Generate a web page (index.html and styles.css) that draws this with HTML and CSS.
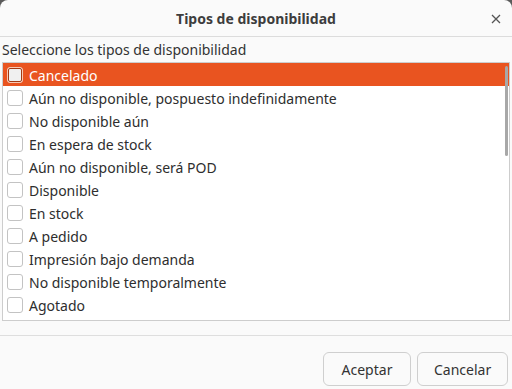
FILE: index.html
```html
<!DOCTYPE html>
<html lang="es">
<head>
  <meta charset="UTF-8">
  <meta name="viewport" content="width=device-width, initial-scale=1.0">
  <title>Tipos de disponibilidad</title>
  <link rel="stylesheet" href="styles.css">
</head>
<body>
  <div class="dialog">
    <header class="titlebar">
      <h1>Tipos de disponibilidad</h1>
      <button class="close" aria-label="Cerrar">
        <svg width="10" height="10" viewBox="0 0 10 10"><path d="M1 1L9 9M9 1L1 9" stroke="#555" stroke-width="1.3"/></svg>
      </button>
    </header>

    <main class="content">
      <p class="label">Seleccione los tipos de disponibilidad</p>
      <div class="list">
        <ul>
          <li class="selected"><span class="check"></span>Cancelado</li>
          <li><span class="check"></span>Aún no disponible, pospuesto indefinidamente</li>
          <li><span class="check"></span>No disponible aún</li>
          <li><span class="check"></span>En espera de stock</li>
          <li><span class="check"></span>Aún no disponible, será POD</li>
          <li><span class="check"></span>Disponible</li>
          <li><span class="check"></span>En stock</li>
          <li><span class="check"></span>A pedido</li>
          <li><span class="check"></span>Impresión bajo demanda</li>
          <li><span class="check"></span>No disponible temporalmente</li>
          <li><span class="check"></span>Agotado</li>
        </ul>
        <div class="scrollbar"></div>
      </div>
    </main>

    <footer class="actions">
      <button class="btn">Aceptar</button>
      <button class="btn">Cancelar</button>
    </footer>
  </div>
</body>
</html>
```

FILE: styles.css
```css
* {
  margin: 0;
  padding: 0;
  box-sizing: border-box;
}

html, body {
  width: 512px;
  height: 389px;
  background: #5a5a5a;
  overflow: hidden;
}

body {
  font-family: "Noto Sans", sans-serif;
  font-size: 14px;
  color: #333;
}

.dialog {
  width: 512px;
  height: 389px;
  background: #fafafa;
  border-radius: 8px 8px 0 0;
  display: flex;
  flex-direction: column;
}

/* Barre de titre */
.titlebar {
  position: relative;
  height: 37px;
  border-bottom: 1px solid #dcdcdc;
  display: flex;
  align-items: center;
  justify-content: center;
}

.titlebar h1 {
  font-size: 14px;
  font-weight: bold;
  color: #3d3d3d;
}

.close {
  position: absolute;
  right: 10px;
  top: 13px;
  width: 12px;
  height: 12px;
  border: none;
  background: none;
  display: flex;
  align-items: center;
  justify-content: center;
}

/* Liste */
.content {
  padding: 0 2px;
}

.label {
  height: 25px;
  line-height: 22px;
  padding-top: 2px;
}

.list {
  position: relative;
  height: 259px;
  background: #fff;
  border: 1px solid #cdcdcd;
  overflow: hidden;
}

.list ul {
  list-style: none;
}

.list li {
  height: 23px;
  display: flex;
  align-items: center;
  gap: 6px;
  padding-left: 4px;
  padding-top: 1px;
  color: #2e2e2e;
  white-space: nowrap;
}

.list li.selected {
  background: #e95420;
  color: #fff;
}

.check {
  width: 16px;
  height: 16px;
  background: #fff;
  border: 1px solid #c3c3c3;
  border-radius: 3px;
  flex-shrink: 0;
  margin-top: -1px;
}

.selected .check {
  background: #f0f0f0;
  border-color: #f8c9b5;
  outline: 1px solid #a33a14;
  outline-offset: -2px;
}

.scrollbar {
  position: absolute;
  right: 1px;
  top: 3px;
  width: 3px;
  height: 90px;
  background: #a8a8a8;
  border-radius: 2px;
}

/* Boutons */
.actions {
  margin-top: 14px;
  border-top: 1px solid #dedede;
  flex: 1;
  display: flex;
  justify-content: flex-end;
  align-items: flex-start;
  gap: 6px;
  padding: 16px 4px 0 0;
}

.btn {
  font-family: inherit;
  font-size: 14px;
  color: #333;
  background: #fafafa;
  border: 1px solid #cfcfcf;
  border-radius: 6px;
  height: 34px;
  padding: 0 16px;
}

.btn:first-child {
  width: 88px;
}

.btn:last-child {
  width: 91px;
}
```
